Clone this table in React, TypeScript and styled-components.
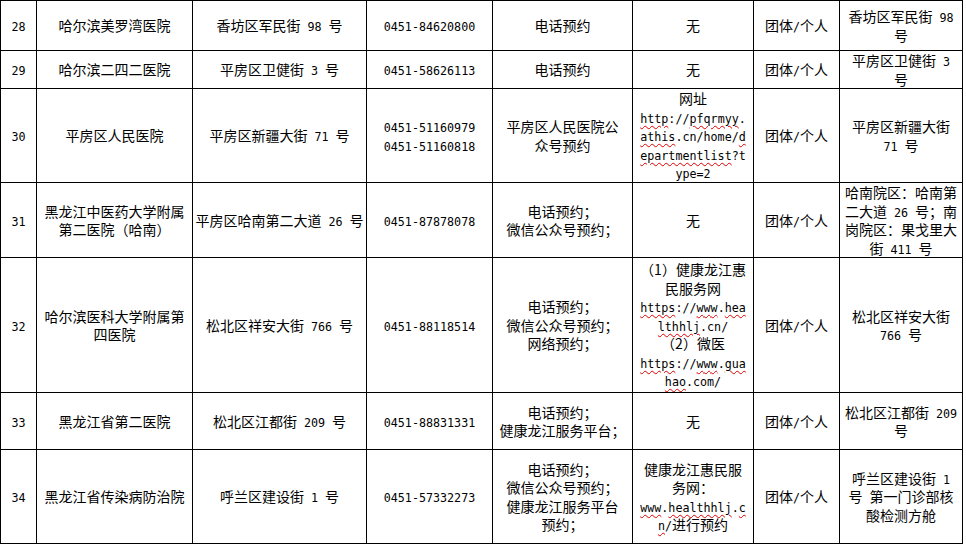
import React from 'react';
import styled, { createGlobalStyle } from 'styled-components';

const GlobalStyle = createGlobalStyle`
  html, body {
    margin: 0;
    padding: 0;
    background: #fff;
  }
  body {
    font-family: "Noto Sans CJK SC", "Noto Sans", sans-serif;
    color: #000;
  }
`;

const Sheet = styled.table`
  border-collapse: collapse;
  table-layout: fixed;
  width: 963px;
  font-size: 14px;
  line-height: 18.5px;
`;

const Col = styled.col<{ $w: number }>`
  width: ${(p) => p.$w}px;
`;

const Row = styled.tr<{ $h: number }>`
  height: ${(p) => p.$h}px;
`;

const Cell = styled.td`
  border: 1px solid #000;
  padding: 0 2px;
  text-align: center;
  vertical-align: middle;
  white-space: nowrap;
  overflow: hidden;
`;

// one wrapped line of a Word cell, fixed pitch
const Line = styled.div`
  height: 18.5px;
  line-height: 18.5px;
`;

// half-width latin runs (digits, urls)
const Lat = styled.span`
  font-family: "DejaVu Sans Mono", "Liberation Mono", monospace;
  font-size: 11.7px;
  line-height: 1;
`;

// spell-checker squiggle under url words
const Typo = styled(Lat)`
  text-decoration-line: underline;
  text-decoration-style: wavy;
  text-decoration-color: #e00000;
  text-decoration-thickness: 1px;
  text-underline-offset: 2px;
`;

const widths = [36, 156, 174, 126, 140, 121, 86, 123];

type Content = React.ReactNode[];

type Hospital = {
  no: string;
  h: number;
  name: Content;
  addr: Content;
  phone: Content;
  method: Content;
  site: Content;
  addr2: Content;
};

const rows: Hospital[] = [
  {
    no: '28',
    h: 50,
    name: ['哈尔滨美罗湾医院'],
    addr: [<>香坊区军民街<Lat> 98 </Lat>号</>],
    phone: [<Lat> 0451-84620800</Lat>],
    method: ['电话预约'],
    site: ['无'],
    addr2: [<>香坊区军民街<Lat> 98</Lat></>, '号'],
  },
  {
    no: '29',
    h: 38,
    name: ['哈尔滨二四二医院'],
    addr: [<>平房区卫健街<Lat> 3 </Lat>号</>],
    phone: [<Lat>0451-58626113</Lat>],
    method: ['电话预约'],
    site: ['无'],
    addr2: [<>平房区卫健街<Lat> 3</Lat></>, '号'],
  },
  {
    no: '30',
    h: 94,
    name: ['平房区人民医院'],
    addr: [<>平房区新疆大街<Lat> 71 </Lat>号</>],
    phone: [<Lat>0451-51160979</Lat>, <Lat>0451-51160818</Lat>],
    method: ['平房区人民医院公', '众号预约'],
    site: [
      '网址',
      <><Typo>http</Typo><Lat>://</Lat><Typo>pfqrmyy</Typo><Lat>.</Lat></>,
      <><Typo>athis</Typo><Lat>.cn/home/</Lat><Typo>d</Typo></>,
      <><Typo>epartmentlist</Typo><Lat>?t</Lat></>,
      <Lat>ype=2</Lat>,
    ],
    addr2: ['平房区新疆大街', <><Lat>71 </Lat>号</>],
  },
  {
    no: '31',
    h: 75,
    name: ['黑龙江中医药大学附属', '第二医院（哈南）'],
    addr: [<>平房区哈南第二大道<Lat> 26 </Lat>号</>],
    phone: [<Lat>0451-87878078</Lat>],
    method: ['电话预约；', '微信公众号预约；'],
    site: ['无'],
    addr2: ['哈南院区：哈南第', <>二大道<Lat> 26 </Lat>号；南</>, '岗院区：果戈里大', <>街<Lat> 411 </Lat>号</>],
  },
  {
    no: '32',
    h: 135,
    name: ['哈尔滨医科大学附属第', '四医院'],
    addr: [<>松北区祥安大街<Lat> 766 </Lat>号</>],
    phone: [<Lat>0451-88118514</Lat>],
    method: ['电话预约；', '微信公众号预约；', '网络预约；'],
    site: [
      '（1）健康龙江惠',
      '民服务网',
      <><Typo>https</Typo><Lat>://</Lat><Typo>www</Typo><Lat>.</Lat><Typo>hea</Typo></>,
      <><Typo>lthhlj</Typo><Lat>.cn/</Lat></>,
      '（2）微医',
      <><Typo>https</Typo><Lat>://</Lat><Typo>www</Typo><Lat>.</Lat><Typo>gua</Typo></>,
      <><Typo>hao</Typo><Lat>.com/</Lat></>,
    ],
    addr2: ['松北区祥安大街', <><Lat>766 </Lat>号</>],
  },
  {
    no: '33',
    h: 57,
    name: ['黑龙江省第二医院'],
    addr: [<>松北区江都街<Lat> 209 </Lat>号</>],
    phone: [<Lat>0451-88831331</Lat>],
    method: ['电话预约；', '健康龙江服务平台；'],
    site: ['无'],
    addr2: [<>松北区江都街<Lat> 209</Lat></>, '号'],
  },
  {
    no: '34',
    h: 94,
    name: ['黑龙江省传染病防治院'],
    addr: [<>呼兰区建设街<Lat> 1 </Lat>号</>],
    phone: [<Lat>0451-57332273</Lat>],
    method: ['电话预约；', '微信公众号预约；', '健康龙江服务平台', '预约；'],
    site: [
      '健康龙江惠民服',
      '务网：',
      <><Typo>www</Typo><Lat>.</Lat><Typo>healthhlj</Typo><Lat>.</Lat><Typo>c</Typo></>,
      <><Typo>n</Typo><Lat>/</Lat>进行预约</>,
    ],
    addr2: [<>呼兰区建设街<Lat> 1</Lat></>, <>号<Lat> </Lat>第一门诊部核</>, '酸检测方舱'],
  },
];

const Lines = ({ items }: { items: Content }) => (
  <>
    {items.map((item, i) => (
      <Line key={i}>{item}</Line>
    ))}
  </>
);

export default function App() {
  return (
    <>
      <GlobalStyle />
      <Sheet>
        <colgroup>
          {widths.map((w, i) => (
            <Col key={i} $w={w} />
          ))}
        </colgroup>
        <tbody>
          {rows.map((r) => (
            <Row key={r.no} $h={r.h}>
              <Cell><Lines items={[<Lat>{r.no}</Lat>]} /></Cell>
              <Cell><Lines items={r.name} /></Cell>
              <Cell><Lines items={r.addr} /></Cell>
              <Cell><Lines items={r.phone} /></Cell>
              <Cell><Lines items={r.method} /></Cell>
              <Cell><Lines items={r.site} /></Cell>
              <Cell><Lines items={[<>团体<Lat>/</Lat>个人</>]} /></Cell>
              <Cell><Lines items={r.addr2} /></Cell>
            </Row>
          ))}
        </tbody>
      </Sheet>
    </>
  );
}
